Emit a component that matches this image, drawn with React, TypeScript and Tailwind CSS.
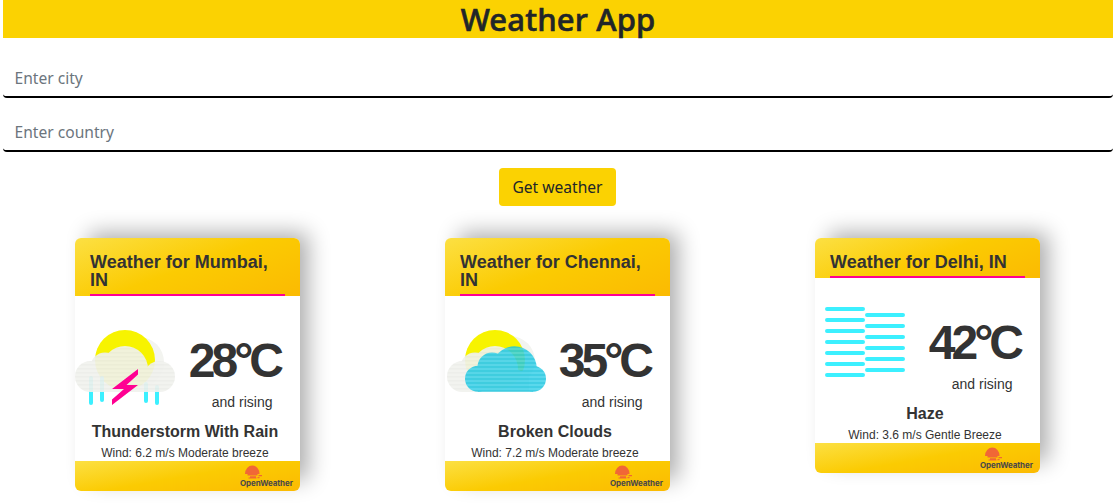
import React from "react";

type Kind = "storm" | "clouds" | "haze";

const report: { city: string; temp: number; sky: string; wind: string; kind: Kind }[] = [
  { city: "Mumbai, IN", temp: 28, sky: "Thunderstorm With Rain", wind: "Wind: 6.2 m/s Moderate breeze", kind: "storm" },
  { city: "Chennai, IN", temp: 35, sky: "Broken Clouds", wind: "Wind: 7.2 m/s Moderate breeze", kind: "clouds" },
  { city: "Delhi, IN", temp: 42, sky: "Haze", wind: "Wind: 3.6 m/s Gentle Breeze", kind: "haze" },
];

function Storm() {
  return (
    <svg viewBox="0 0 100 76" className="block h-[76px] w-[100px] overflow-visible">
      <defs>
        <pattern id="mist" width="4" height="4" patternUnits="userSpaceOnUse">
          <rect width="4" height="4" fill="#f1f2ee" />
          <rect width="4" height="1.500" y="2" fill="#ecede9" />
        </pattern>
      </defs>
      <circle cx="64" cy="32" r="25" fill="#f3f4f0" />
      <circle cx="50" cy="30" r="30" fill="#f7f300" />
      <path d="M16 48v25M27 48v22M71 54v17M82 57v16" stroke="#3cf0ff" strokeWidth="4" strokeLinecap="round" />
      <g fill="url(#mist)" opacity=".92">
        <circle cx="15.500" cy="46.500" r="15.500" />
        <circle cx="30" cy="37" r="14.500" />
        <circle cx="50" cy="39" r="23" />
        <circle cx="84.500" cy="46.500" r="15.500" />
        <path d="M15.500 37H68l8 4 8-2v23H15.500z" />
      </g>
      <path d="M63 39v5.500L51.500 55H63L37 75v-5.500L49 59H37z" fill="#ff0092" />
    </svg>
  );
}

function Clouds() {
  return (
    <svg viewBox="0 0 100 76" className="block h-[76px] w-[100px] overflow-visible">
      <defs>
        <pattern id="lines" width="4" height="4" patternUnits="userSpaceOnUse">
          <rect width="4" height="4" fill="#22c7e0" />
          <rect width="4" height="2" y="2" fill="#3fd2ea" />
        </pattern>
      </defs>
      <circle cx="65" cy="31" r="25" fill="#f3f4f0" />
      <circle cx="50" cy="30" r="30" fill="#f7f300" />
      <g fill="url(#mist)" opacity=".92">
        <circle cx="17.500" cy="46.500" r="15.500" />
        <circle cx="30" cy="37" r="14.500" />
        <circle cx="50" cy="39" r="23" />
        <path d="M17.500 37H68l8 4 8-2v23H17.500z" />
      </g>
      <g fill="url(#lines)" opacity=".86">
        <circle cx="33" cy="48.800" r="13" />
        <circle cx="47" cy="37" r="14.500" />
        <circle cx="69.500" cy="38.500" r="22.300" />
        <circle cx="88" cy="48.800" r="13" />
        <path d="M33 40h55v21.800H33z" />
      </g>
    </svg>
  );
}

function Haze() {
  return (
    <svg viewBox="0 0 100 76" className="block h-[76px] w-[100px] overflow-visible">
      <g stroke="#3cf0ff" strokeWidth="4" strokeLinecap="round">
        <path d="M12 2h36M12 13h36M12 24h36M12 35h36M12 46h36M12 57h36M12 68h36M52 8h36M52 19h36M52 30h36M52 41h36M52 52h36M52 63h36" />
      </g>
    </svg>
  );
}

const icons = { storm: Storm, clouds: Clouds, haze: Haze };

function Logo() {
  return (
    <div className="flex w-[53px] flex-col items-start">
      <svg viewBox="0 0 18 14" className="ml-[5px] block h-[14px] w-[18px]" fill="#f16736">
        <path d="M0 9a7.300 8.500 0 1 1 14.600 0z" />
        <path d="M2.500 9h10v1.500h-10zM13.500 10h3.500v1.200h-3.500zM5 11.200h6v1.300H5zM3.500 12.500h8v1h-8zM12.500 12h2v1.200h-2z" />
      </svg>
      <span className="font-[Inter,sans-serif] text-[8px] leading-[8px] font-bold tracking-[-0.1px] whitespace-nowrap text-[#48484a]">
        OpenWeather
      </span>
    </div>
  );
}

function Card({ item }: { item: (typeof report)[number] }) {
  const Icon = icons[item.kind];
  return (
    <article className="w-[225px] overflow-hidden rounded-[6px] bg-white text-[#333] shadow-[11px_-8px_22px_-3px_rgba(0,0,0,0.33)]">
      <header className="bg-[linear-gradient(160deg,#fce043_0%,#fbcb02_50%,#fbba02_100%)] px-[15px] pt-[15px]">
        <h2 className="border-b-2 border-[#ff0092] pb-[5px] text-[18px] leading-[18px] font-bold">
          Weather for {item.city}
        </h2>
      </header>
      <div className="flex h-[117px] justify-between pt-[34px]">
        <div className={item.kind === "haze" ? "-mt-[5px]" : ""}>
          <Icon />
        </div>
        <div className="flex w-[125px] flex-col pt-px">
          <div className="pr-[20px] text-right text-[48px] leading-[60px] font-bold tracking-[-4px] whitespace-nowrap">
            {item.temp}°C
          </div>
          <div className="mt-[2px] pr-[27.500px] text-right text-[14px] leading-[18px]">and rising</div>
        </div>
      </div>
      <div className="pt-[9px] pr-[5px] text-center">
        <div className="text-[16px] leading-[20px] font-bold">{item.sky}</div>
        <div className="mt-[3px] text-[12px] leading-[16px]">{item.wind}</div>
      </div>
      <footer className="flex h-[30px] justify-end bg-[linear-gradient(170deg,#fce043_0%,#fbcb02_50%,#fbba02_100%)] pt-[4px] pr-[7px]">
        <Logo />
      </footer>
    </article>
  );
}

export default function App() {
  const field =
    "block h-[38px] w-full rounded-[4px] border-b-2 border-black bg-white pr-[12px] pl-[11.500px] text-[15.600px] text-[#212529] placeholder:text-[#6c757d] outline-none";
  return (
    <main className="h-[504px] overflow-hidden bg-white pr-[2px] pl-[3px] font-['Liberation_Sans',sans-serif]">
      <h1 className="h-[38px] bg-[#fbd202] text-center font-['Noto_Sans',sans-serif] text-[31px] leading-[38px] font-medium tracking-[0.15px] text-[#212529] [-webkit-text-stroke:0.6px_#212529]">
        Weather App
      </h1>
      <form className="flex flex-col items-center gap-4 pt-[22px] font-['Noto_Sans',sans-serif]" onSubmit={(e) => e.preventDefault()}>
        <input className={field} placeholder="Enter city" />
        <input className={field} placeholder="Enter country" />
        <button className="mr-px h-[38px] w-[117px] rounded-[4px] bg-[#fbd202] pt-px text-[15.600px] text-[#212529]">Get weather</button>
      </form>
      <section className="mt-[32px] grid grid-cols-[370px_370px_370px] items-start pl-[72px]">
        {report.map((item) => (
          <Card key={item.city} item={item} />
        ))}
      </section>
    </main>
  );
}
